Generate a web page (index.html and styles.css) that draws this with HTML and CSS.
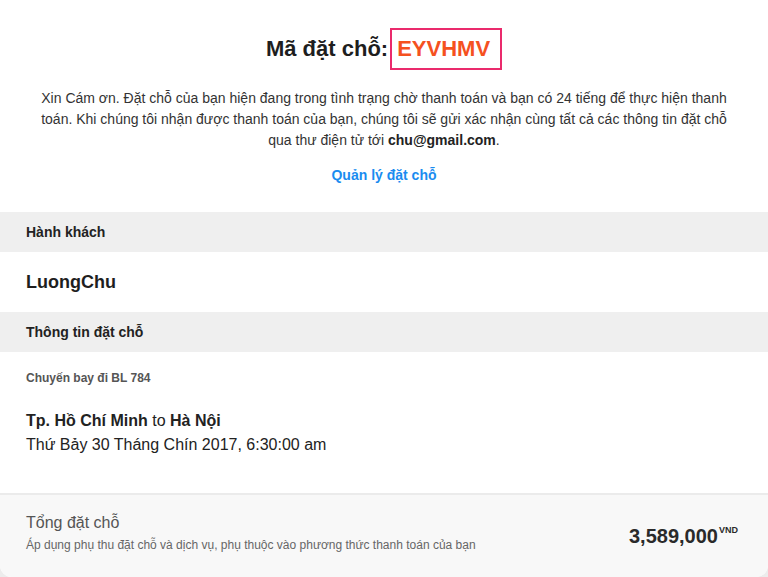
FILE: index.html
```html
<!DOCTYPE html>
<html>
<head>
    <title>Mã đặt chỗ</title>
    <link rel="stylesheet" href="styles.css">
</head>
<body>
    <div class="card">
        <div class="intro">
            <h1 class="title">Mã đặt chỗ:<span class="code">EYVHMV</span></h1>
            <p class="message">Xin Cám ơn. Đặt chỗ của bạn hiện đang trong tình trạng chờ thanh toán và bạn có 24 tiếng để thực hiện thanh toán. Khi chúng tôi nhận được thanh toán của bạn, chúng tôi sẽ gửi xác nhận cùng tất cả các thông tin đặt chỗ qua thư điện tử tới <b>chu@gmail.com</b>.</p>
            <a class="manage" href="#">Quản lý đặt chỗ</a>
        </div>

        <div class="section-bar">Hành khách</div>
        <div class="passenger">LuongChu</div>

        <div class="section-bar">Thông tin đặt chỗ</div>
        <div class="flight">
            <div class="flight-no">Chuyến bay đi BL 784</div>
            <div class="route"><b>Tp. Hồ Chí Minh</b> to <b>Hà Nội</b></div>
            <div class="date">Thứ Bảy 30 Tháng Chín 2017, 6:30:00 am</div>
        </div>

        <div class="total">
            <div class="total-text">
                <div class="total-label">Tổng đặt chỗ</div>
                <div class="total-note">Áp dụng phụ thu đặt chỗ và dịch vụ, phụ thuộc vào phương thức thanh toán của bạn</div>
            </div>
            <div class="price">3,589,000<sup>VND</sup></div>
        </div>
    </div>
</body>
</html>
```

FILE: styles.css
```css
* {
    box-sizing: border-box;
}
body {
    margin: 0;
    font-family: "Liberation Sans", Arial, sans-serif;
    color: #222;
    background: #ececec;
}
.card {
    width: 768px;
    height: 577px;
    background: #fff;
    border-radius: 0 0 12px 12px;
    overflow: hidden;
    display: flex;
    flex-direction: column;
}
.intro {
    text-align: center;
    padding: 28px 34px 26px;
}
.title {
    margin: 0;
    font-size: 22px;
    line-height: 38px;
    color: #1e1e1e;
}
.code {
    display: inline-block;
    margin-left: 2px;
    padding: 0 10px 0 5px;
    border: 2px solid #ea2a6c;
    color: #f5511f;
}
.message {
    margin: 18px 0 14px;
    font-size: 14px;
    line-height: 21px;
    color: #333;
}
.message b {
    color: #222;
}
.manage {
    display: inline-block;
    font-size: 14px;
    line-height: 21px;
    font-weight: bold;
    color: #1a8cf0;
    text-decoration: none;
}
.section-bar {
    height: 40px;
    padding: 0 26px;
    display: flex;
    align-items: center;
    background: #efefef;
    font-size: 14px;
    font-weight: bold;
    color: #222;
}
.passenger {
    height: 60px;
    padding: 0 26px;
    display: flex;
    align-items: center;
    font-size: 18px;
    font-weight: bold;
    color: #1e1e1e;
}
.flight {
    flex: 1;
    padding: 19px 26px 0;
}
.flight-no {
    font-size: 12px;
    line-height: 14px;
    font-weight: bold;
    color: #555;
    margin-bottom: 24px;
}
.route,
.date {
    font-size: 16px;
    line-height: 24px;
    color: #222;
}
.total {
    height: 84px;
    border-top: 2px solid #ebebeb;
    background: #f8f8f8;
    padding: 0 30px 6px 26px;
    display: flex;
    align-items: center;
    justify-content: space-between;
}
.total-label {
    font-size: 16px;
    line-height: 20px;
    color: #555;
    margin-bottom: 4px;
}
.total-note {
    font-size: 12px;
    line-height: 16px;
    color: #666;
}
.price {
    font-size: 20px;
    font-weight: bold;
    color: #2a2a2a;
    padding-top: 6px;
}
.price sup {
    font-size: 9px;
    vertical-align: 10px;
    margin-left: 1px;
}
```
